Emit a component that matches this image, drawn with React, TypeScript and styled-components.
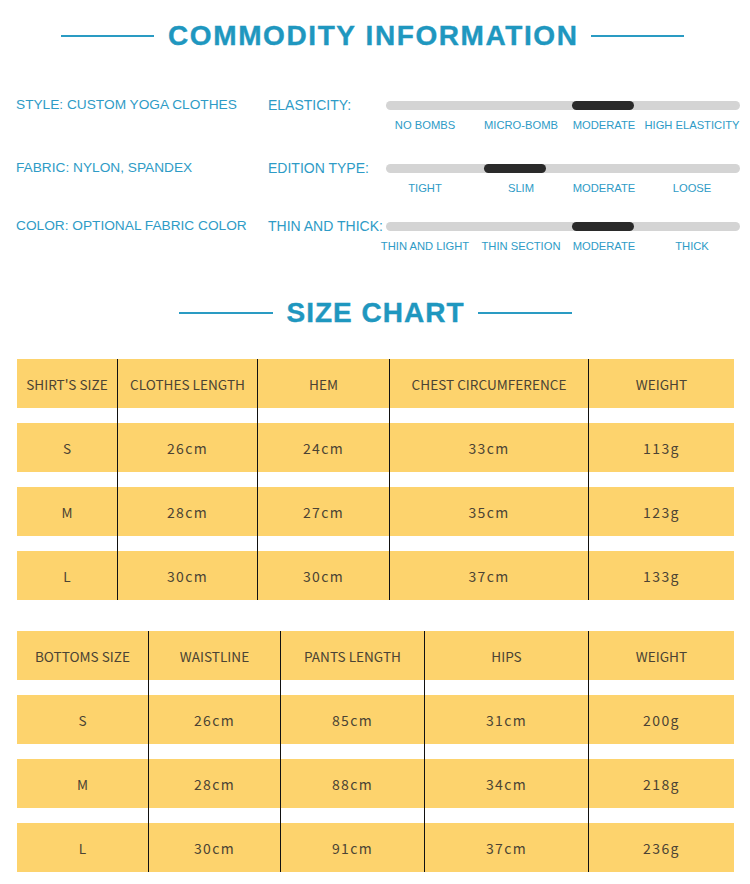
import React from 'react';
import styled, { createGlobalStyle } from 'styled-components';

const GlobalStyle = createGlobalStyle`
  html, body {
    margin: 0;
    padding: 0;
    background: #ffffff;
  }
  body {
    font-family: "Liberation Sans", Arial, sans-serif;
  }
`;

const Page = styled.div`
  width: 750px;
  padding: 20px 0 13px;
  box-sizing: border-box;
`;

const SectionTitle = styled.div<{ $lineWidth: number }>`
  display: flex;
  justify-content: center;
  align-items: center;
  gap: 14px;
  height: 32px;
  padding-right: 5px;
  &::before,
  &::after {
    content: '';
    display: block;
    width: ${p => p.$lineWidth}px;
    height: 2px;
    background: #2a9bc3;
  }
`;

const TitleText = styled.h2<{ $spacing: number }>`
  margin: 0 ${p => -p.$spacing}px 0 0;
  font-family: "Liberation Sans", Arial, sans-serif;
  font-weight: 700;
  font-size: 28px;
  line-height: 32px;
  letter-spacing: ${p => p.$spacing}px;
  color: #1f97bf;
  -webkit-text-stroke: 0.4px #1f97bf;
`;

const Info = styled.div`
  display: flex;
  flex-direction: column;
  padding: 44px 0 0 16px;
`;

const InfoRow = styled.div<{ $top: number }>`
  display: grid;
  grid-template-columns: 252px 118px 354px;
  align-items: start;
  margin-top: ${p => p.$top}px;
`;

const InfoText = styled.div<{ $size: number }>`
  font-size: ${p => p.$size}px;
  line-height: 18px;
  color: #2e9bc6;
  white-space: nowrap;
`;

const ScaleBlock = styled.div`
  display: flex;
  flex-direction: column;
  padding-top: 5px;
`;

const Bar = styled.div`
  display: grid;
  grid-template-columns: repeat(4, 1fr);
  height: 9px;
  border-radius: 5px;
  background: #d4d4d4;
`;

const Knob = styled.div<{ $slot: number }>`
  grid-column: ${p => p.$slot + 1};
  justify-self: center;
  width: 62px;
  height: 9px;
  border-radius: 5px;
  background: #2a2a2a;
  transform: translateX(-4px);
`;

const Ticks = styled.div`
  display: grid;
  grid-template-columns: 90px 102px 64px 112px;
  margin: 8px 0 0 -6px;
`;

const Tick = styled.span`
  justify-self: center;
  font-size: 11.2px;
  line-height: 14px;
  color: #2e9bc6;
  white-space: nowrap;
`;

const ChartTitle = styled(SectionTitle)`
  margin-top: 44px;
  padding-right: 0;
`;

const Table = styled.div<{ $top: number }>`
  display: flex;
  margin: ${p => p.$top}px 16px 0 17px;
`;

const Column = styled.div<{ $width: number; $first?: boolean }>`
  display: flex;
  flex-direction: column;
  gap: 15px;
  width: ${p => p.$width}px;
  box-sizing: border-box;
  border-left: ${p => (p.$first ? 'none' : '1.5px solid #111')};
`;

const Cell = styled.div<{ $head?: boolean }>`
  display: flex;
  align-items: center;
  justify-content: center;
  height: 49px;
  background: #fdd36d;
  font-family: "Noto Sans CJK SC", "Noto Sans", sans-serif;
  font-size: ${p => (p.$head ? '13.6px' : '14px')};
  color: #4b4334;
  letter-spacing: ${p => (p.$head ? '0' : '1.4px')};
  white-space: nowrap;
`;

type Scale = { slot: number; ticks: string[] };

const info: { left: string; right: string; top: number; scale: Scale }[] = [
  {
    left: 'STYLE: CUSTOM YOGA CLOTHES',
    right: 'ELASTICITY:',
    top: 0,
    scale: { slot: 2, ticks: ['NO BOMBS', 'MICRO-BOMB', 'MODERATE', 'HIGH ELASTICITY'] },
  },
  {
    left: 'FABRIC: NYLON, SPANDEX',
    right: 'EDITION TYPE:',
    top: 27,
    scale: { slot: 1, ticks: ['TIGHT', 'SLIM', 'MODERATE', 'LOOSE'] },
  },
  {
    left: 'COLOR: OPTIONAL FABRIC COLOR',
    right: 'THIN AND THICK:',
    top: 22,
    scale: { slot: 2, ticks: ['THIN AND LIGHT', 'THIN SECTION', 'MODERATE', 'THICK'] },
  },
];

const shirt = {
  widths: [100, 140, 132, 199, 146],
  rows: [
    ["SHIRT'S SIZE", 'CLOTHES LENGTH', 'HEM', 'CHEST CIRCUMFERENCE', 'WEIGHT'],
    ['S', '26cm', '24cm', '33cm', '113g'],
    ['M', '28cm', '27cm', '35cm', '123g'],
    ['L', '30cm', '30cm', '37cm', '133g'],
  ],
};

const bottoms = {
  widths: [131, 132, 144, 164, 146],
  rows: [
    ['BOTTOMS SIZE', 'WAISTLINE', 'PANTS LENGTH', 'HIPS', 'WEIGHT'],
    ['S', '26cm', '85cm', '31cm', '200g'],
    ['M', '28cm', '88cm', '34cm', '218g'],
    ['L', '30cm', '91cm', '37cm', '236g'],
  ],
};

function SizeTable({ data, top }: { data: typeof shirt; top: number }) {
  return (
    <Table $top={top}>
      {data.widths.map((w, c) => (
        <Column key={c} $width={w} $first={c === 0}>
          {data.rows.map((row, r) => (
            <Cell key={r} $head={r === 0 || c === 0}>{row[c]}</Cell>
          ))}
        </Column>
      ))}
    </Table>
  );
}

export default function App() {
  return (
    <Page>
      <GlobalStyle />
      <SectionTitle $lineWidth={93}>
        <TitleText $spacing={1.6}>COMMODITY INFORMATION</TitleText>
      </SectionTitle>

      <Info>
        {info.map(row => (
          <InfoRow key={row.right} $top={row.top}>
            <InfoText $size={13.7}>{row.left}</InfoText>
            <InfoText $size={14}>{row.right}</InfoText>
            <ScaleBlock>
              <Bar>
                <Knob $slot={row.scale.slot} />
              </Bar>
              <Ticks>
                {row.scale.ticks.map(t => (
                  <Tick key={t}>{t}</Tick>
                ))}
              </Ticks>
            </ScaleBlock>
          </InfoRow>
        ))}
      </Info>

      <ChartTitle $lineWidth={94}>
        <TitleText $spacing={1}>SIZE CHART</TitleText>
      </ChartTitle>

      <SizeTable data={shirt} top={30} />
      <SizeTable data={bottoms} top={31} />
    </Page>
  );
}
